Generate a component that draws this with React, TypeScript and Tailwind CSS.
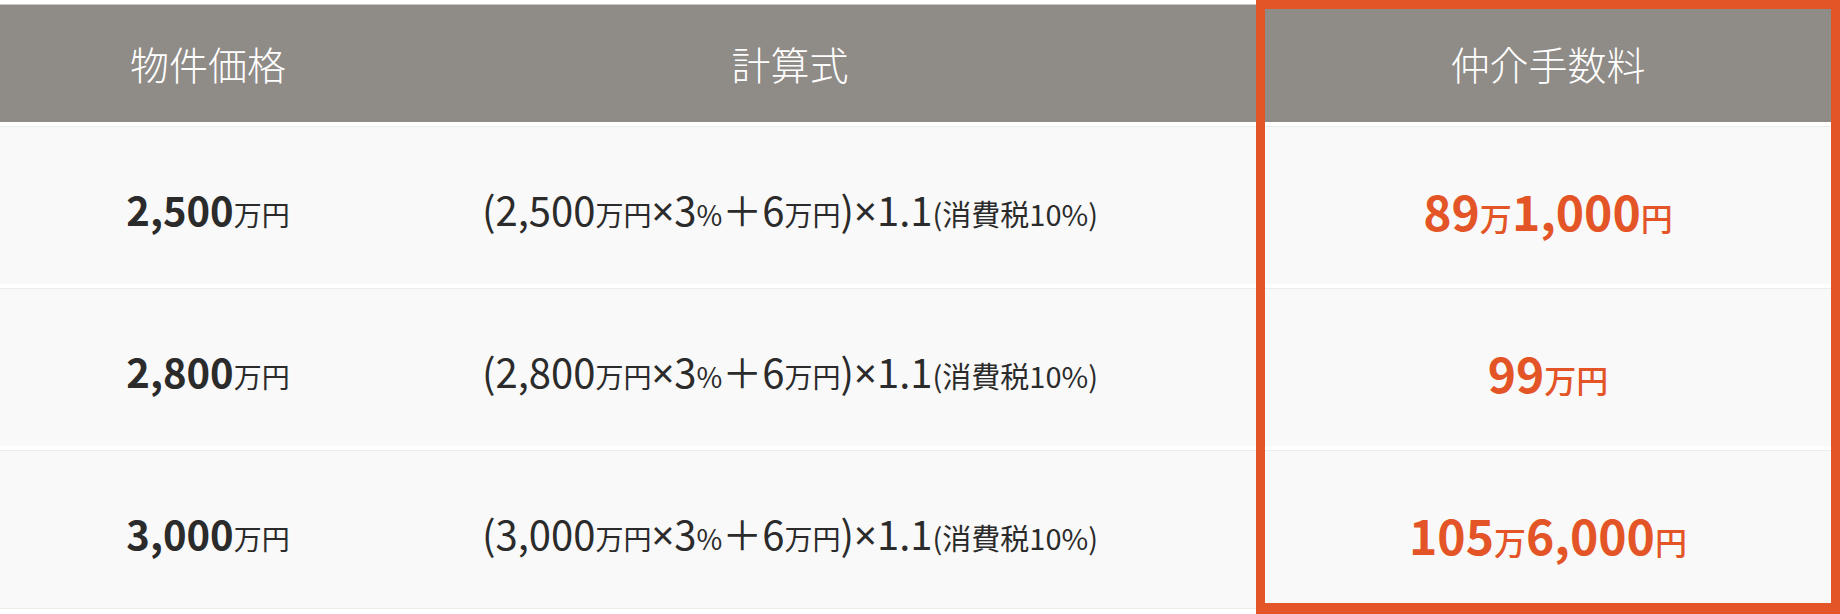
import React from "react";

const rows = [
  { price: "2,500", fee: ["89", "1,000"] },
  { price: "2,800", fee: ["99", ""] },
  { price: "3,000", fee: ["105", "6,000"] },
];

export default function App() {
  const font = { fontFamily: '"Noto Sans CJK JP", "Noto Sans", sans-serif' };
  const latin = { fontFamily: '"Noto Sans", "Noto Sans CJK JP", sans-serif' };
  return (
    <div className="relative w-[1840px] h-[614px] bg-white overflow-hidden" style={font}>
      <div className="pt-[4px]">
        <div className="grid grid-cols-[416px_840px_1fr] h-[118px] bg-[#8f8b87] border-t border-[#c9c7c5] text-white text-[39px] font-light">
          <div className="flex items-center justify-center">物件価格</div>
          <div className="flex items-center justify-center pr-[92px]">計算式</div>
          <div className="flex items-center justify-center">仲介手数料</div>
        </div>
        {rows.map((r, i) => (
          <div
            key={i}
            className="mt-[4px] grid grid-cols-[416px_840px_1fr] h-[158px] bg-[#f9f9f9] border-t border-[#ececec] text-[#2b2b2b]"
          >
            <div className="flex items-baseline justify-center self-center pt-[6px]">
              <span className="text-[40px] font-bold leading-none">{r.price}</span>
              <span className="text-[28px] leading-none">万円</span>
            </div>
            <div className="flex items-baseline justify-center pr-[92px] pt-[8px] self-center">
              <span className="text-[40px] leading-none">({r.price}</span>
              <span className="text-[28px] leading-none">万円</span>
              <span className="text-[40px] leading-none" style={latin}>×</span>
              <span className="text-[40px] leading-none">3</span>
              <span className="text-[28px] leading-none">%</span>
              <span className="text-[40px] leading-none">＋6</span>
              <span className="text-[28px] leading-none">万円</span>
              <span className="text-[40px] leading-none">)</span>
              <span className="text-[40px] leading-none" style={latin}>×</span>
              <span className="text-[40px] leading-none">1.1</span>
              <span className="text-[29px] leading-none">(消費税10%)</span>
            </div>
            <div className="flex items-baseline justify-center self-center pt-[8px] text-[#e35527] font-bold">
              <span className="text-[48px] leading-none">{r.fee[0]}</span>
              <span className="text-[32px] leading-none font-medium">万</span>
              {r.fee[1] && <span className="text-[48px] leading-none">{r.fee[1]}</span>}
              <span className="text-[32px] leading-none font-medium">円</span>
            </div>
          </div>
        ))}
        <div className="border-t border-[#ececec]" />
      </div>
      <div className="absolute left-[1256px] top-0 w-[584px] h-[614px] border-[9px] border-b-[11px] border-[#e35527] pointer-events-none" />
    </div>
  );
}
